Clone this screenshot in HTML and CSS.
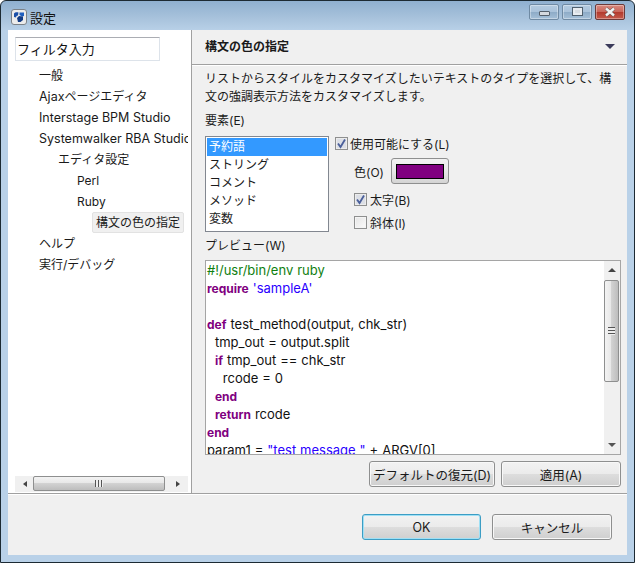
FILE: index.html
```html
<!DOCTYPE html>
<html lang="ja">
<head>
<meta charset="utf-8">
<title>設定</title>
<link rel="stylesheet" href="styles.css">
</head>
<body>
<div class="window">
  <div class="titlebar">
    <svg class="app-icon" width="16" height="16" viewBox="0 0 16 16"><rect x=".5" y=".5" width="15" height="15" rx="2.5" fill="#ececec" stroke="#7c8288"/><path d="M3 4.5C4 3 6 3 7.5 3.5L7 6.5 5.5 7 5 8.5 3 8z" fill="#1a4fa8"/><path d="M8.5 3.5h4.5v3.5L11 7.5 8.5 6z" fill="#1f5fc0"/><path d="M6 9l2-2 4 .5V11l-2.5 2H7z" fill="#123c86"/></svg>
    <span class="title">設定</span>
    <div class="controls">
      <div class="ctl ctl-min"><span class="glyph-min"></span></div>
      <div class="ctl ctl-max"><span class="glyph-max"></span></div>
      <div class="ctl ctl-close"><svg width="14" height="10" viewBox="0 0 14 10"><path d="M3 1.5l8 7M11 1.5l-8 7" stroke="#555" stroke-width="3.4" fill="none"/><path d="M3 1.5l8 7M11 1.5l-8 7" stroke="#f2f2f2" stroke-width="2.4" fill="none"/></svg></div>
    </div>
  </div>
  <div class="client">
    <div class="main">
      <div class="side">
        <div class="filter">フィルタ入力</div>
        <ul class="tree">
          <li class="l1">一般</li>
          <li class="l1"><span class="lat">Ajax</span>ページエディタ</li>
          <li class="l1"><span class="lat">Interstage BPM Studio</span></li>
          <li class="l1"><span class="lat">Systemwalker RBA Studio</span></li>
          <li class="l2">エディタ設定</li>
          <li class="l3">Perl</li>
          <li class="l3">Ruby</li>
          <li class="l4"><span class="sel">構文の色の指定</span></li>
          <li class="l1">ヘルプ</li>
          <li class="l1">実行/デバッグ</li>
        </ul>
        <div class="hscroll">
          <span class="arrow-left"></span>
          <div class="hthumb"><span class="grip-v"></span></div>
          <span class="arrow-right"></span>
        </div>
      </div>
      <div class="pane">
        <div class="pane-head">
          <span class="pane-title">構文の色の指定</span>
          <span class="menu-arrow"></span>
        </div>
        <div class="pane-body">
          <p class="desc">リストからスタイルをカスタマイズしたいテキストのタイプを選択して、構文の強調表示方法をカスタマイズします。</p>
          <div class="label-e">要素(E)</div>
          <div class="form">
            <ul class="list">
              <li class="on">予約語</li>
              <li>ストリング</li>
              <li>コメント</li>
              <li>メソッド</li>
              <li>変数</li>
            </ul>
            <div class="opts">
              <div class="opt opt-main"><span class="cb cb-on"><svg width="11" height="11" viewBox="0 0 11 11"><path d="M2 5.5l2.5 3.5L9 1.5" stroke="#4a5f9a" stroke-width="1.8" fill="none"/></svg></span>使用可能にする(L)</div>
              <div class="color-row">色(O)<span class="color-btn"><span class="swatch"></span></span></div>
              <div class="opt sub"><span class="cb cb-on"><svg width="11" height="11" viewBox="0 0 11 11"><path d="M2 5.5l2.5 3.5L9 1.5" stroke="#4a5f9a" stroke-width="1.8" fill="none"/></svg></span>太字(B)</div>
              <div class="opt sub italic-row"><span class="cb"></span>斜体(I)</div>
            </div>
          </div>
          <div class="label-w">プレビュー(W)</div>
          <div class="editor">
            <div class="code">
              <div class="ln"><span class="c">#!/usr/bin/env ruby</span></div>
              <div class="ln"><b class="k">require</b> <span class="s">'sampleA'</span></div>
              <div class="ln"></div>
              <div class="ln"><b class="k">def</b> test_method(output, chk_str)</div>
              <div class="ln">  tmp_out = output.split</div>
              <div class="ln">  <b class="k">if</b> tmp_out == chk_str</div>
              <div class="ln">    rcode = 0</div>
              <div class="ln">  <b class="k">end</b></div>
              <div class="ln">  <b class="k">return</b> rcode</div>
              <div class="ln"><b class="k">end</b></div>
              <div class="ln">param1 = <span class="s">"test message "</span> + ARGV[0]</div>
            </div>
            <div class="vscroll">
              <span class="arrow-up"></span>
              <div class="vthumb"><span class="grip-h"></span></div>
              <span class="arrow-down"></span>
            </div>
          </div>
          <div class="actions">
            <button class="btn btn-default">デフォルトの復元(D)</button>
            <button class="btn btn-apply">適用(A)</button>
          </div>
        </div>
      </div>
    </div>
    <div class="footer">
      <button class="btn btn-foot btn-ok">OK</button>
      <button class="btn btn-foot">キャンセル</button>
    </div>
  </div>
</div>
</body>
</html>
```
FILE: styles.css
```css
* { box-sizing: border-box; }
html, body { margin: 0; padding: 0; }
body { width: 635px; height: 563px; overflow: hidden; background: #fff; font-family: "Inter", "Noto Sans CJK JP", sans-serif; font-size: 12px; color: #1a1a1a; }
ul { list-style: none; margin: 0; padding: 0; }
p { margin: 0; }

.window { width: 635px; height: 563px; display: flex; flex-direction: column; border: 1px solid #1c2a33; border-radius: 6px 6px 0 0; background: linear-gradient(#8fb0d0 0, #a5c0da 15px, #b9d1e8 30px, #b9d1e8 100%); }
.titlebar { height: 29px; flex: none; display: flex; align-items: center; padding: 3px 9px 0 10px; }
.app-icon { flex: none; }
.title { margin-left: 3px; font-size: 13px; color: #111; font-family: "Noto Sans CJK JP", sans-serif; }
.controls { margin-left: auto; display: flex; gap: 3px; margin-top: -11px; }
.ctl { width: 30px; height: 16px; border: 1px solid #6f8aa3; border-radius: 2px; display: flex; align-items: center; justify-content: center; background: linear-gradient(#b4cbe0 0, #a9c2da 50%, #8dabc7 51%, #a5c0d8 100%); box-shadow: inset 0 0 0 1px rgba(255,255,255,.35); }
.ctl-close { background: linear-gradient(#d98a80 0, #c9655a 50%, #b23a2e 51%, #c55a4c 100%); border-color: #6b3a3a; }
.glyph-min { width: 11px; height: 5px; margin-top: 3px; background: #d5d9de; border: 1px solid #555f6a; border-radius: 1px; }
.glyph-max { width: 11px; height: 9px; background: #d8dde2; border: 1px solid #50606e; box-shadow: inset 0 0 0 2px #e8ecf0; }

.client { flex: 1; margin: 0 7px 7px; background: #f0f0f0; display: flex; flex-direction: column; min-height: 0; }
.main { height: 464px; flex: none; display: flex; border-bottom: 1px solid #a0a0a0; }

.side { width: 184px; flex: none; background: #fff; border-right: 1px solid #a0a0a0; display: flex; flex-direction: column; padding: 7px 4px 1px 7px; position: relative; }
.filter { width: 145px; height: 24px; border: 1px solid #dde3ea; border-top-color: #abadb3; font-size: 13px; line-height: 22px; padding-left: 1px; color: #111; background: #fff; flex: none; font-family: "Noto Sans CJK JP", sans-serif; }
.tree { flex: 1; overflow: hidden; padding-top: 4px; width: 173px; white-space: nowrap; }
.tree li { height: 21px; line-height: 21px; font-size: 12px; }
.lat { font-size: 12.5px; }
.l1 { padding-left: 24px; }
.l2 { padding-left: 43px; }
.l3 { padding-left: 62px; }
.l4 { padding-left: 77px; }
.sel { display: inline-block; height: 21px; line-height: 20px; padding: 0 3px; background: #f0f0f0; border: 1px solid #e2e2e2; border-radius: 2px; }
.hscroll { height: 16px; width: 173px; flex: none; background: #f0f0f0; display: flex; align-items: center; justify-content: space-between; padding: 0 8px; position: relative; }
.arrow-left { border: 3.5px solid transparent; border-right: 4px solid #444; border-left: 0; }
.arrow-right { border: 3.5px solid transparent; border-left: 4px solid #444; border-right: 0; }
.hthumb { position: absolute; left: 18px; top: 0; width: 132px; height: 15px; border: 1px solid #8e8f8f; border-radius: 2px; background: linear-gradient(#f3f3f3 0, #e8e8e8 45%, #d2d2d2 50%, #bdbdbd 100%); display: flex; align-items: center; justify-content: center; }
.grip-v { width: 8px; height: 7px; background: repeating-linear-gradient(90deg, #555 0 1px, #eee 1px 3px); }

.pane { flex: 1; min-width: 0; display: flex; flex-direction: column; }
.pane-head { height: 35px; flex: none; border-bottom: 1px solid #a0a0a0; box-shadow: 0 1px 0 #fff; display: flex; align-items: center; justify-content: space-between; padding: 0 12px 4px 13px; }
.pane-title { font-weight: 700; font-size: 12px; font-family: "Noto Sans CJK JP", sans-serif; }
.menu-arrow { border: 5px solid transparent; border-top: 5px solid #3a3a5a; border-bottom: 0; margin-top: 3px; }
.pane-body { flex: 1; padding: 5px 6px 0 13px; display: flex; flex-direction: column; min-height: 0; }
.desc { font-size: 12px; line-height: 18px; width: 412px; height: 36px; }
.label-e { line-height: 18px; margin-top: 6px; }
.form { display: flex; margin-top: 6px; height: 96px; }
.list { width: 124px; height: 96px; border: 1px solid #828790; background: #fff; padding: 1px; flex: none; }
.list li { height: 18px; line-height: 18px; padding-left: 2px; }
.list li.on { background: #3399ff; color: #fff; }
.opts { margin-left: 6px; display: flex; flex-direction: column; }
.opt { display: flex; align-items: center; height: 14px; gap: 3px; white-space: nowrap; }
.opt-main { gap: 2px; }
.cb { width: 13px; height: 13px; border: 1px solid #8e8f8f; background: linear-gradient(135deg, #e4e4e4, #fbfbfb); display: inline-flex; align-items: center; justify-content: center; box-shadow: inset 0 0 0 1px #f4f4f4; flex: none; }
.cb-on { background: #dcdfe6; box-shadow: inset 0 0 0 1px #ececec; }
.color-row { display: flex; align-items: center; height: 26px; margin-top: 8px; padding-left: 19px; gap: 7px; }
.color-btn { width: 58px; height: 26px; border: 1px solid #8e8f8f; border-radius: 3px; background: linear-gradient(#f2f2f2, #e8e8e8 50%, #d4d4d4); padding: 5px 4px; display: block; }
.swatch { display: block; width: 48px; height: 15px; background: #800080; border: 1px solid #000; }
.sub { margin-left: 19px; margin-top: 8px; }
.italic-row { margin-top: 9px; }
.label-w { line-height: 18px; margin-top: 5px; }
.editor { height: 195px; margin-top: 5px; flex: none; border: 1px solid #a5a5a5; background: #fff; position: relative; overflow: hidden; display: flex; }
.code { flex: 1; padding: 0 0 0 1px; font-size: 13px; color: #111; overflow: hidden; word-spacing: .3px; }
.ln { height: 18px; line-height: 18px; white-space: pre; overflow: visible; }
.k { color: #800080; font-weight: 700; font-size: 12px; }
.c { color: #108010; }
.s { color: #2a00ff; }
.vscroll { width: 16px; flex: none; background: #f0f0f0; position: relative; display: flex; flex-direction: column; align-items: center; justify-content: space-between; padding: 7px 0; }
.arrow-up { border: 4px solid transparent; border-bottom: 4px solid #444; border-top: 0; }
.arrow-down { border: 4px solid transparent; border-top: 4px solid #555; border-bottom: 0; }
.vthumb { position: absolute; left: 0; top: 19px; width: 15px; height: 102px; border: 1px solid #8e8f8f; border-radius: 2px; background: linear-gradient(90deg, #f3f3f3 0, #e8e8e8 45%, #d2d2d2 50%, #bdbdbd 100%); display: flex; align-items: center; justify-content: center; }
.grip-h { width: 7px; height: 8px; background: repeating-linear-gradient(#555 0 1px, #eee 1px 3px); }

.btn { font-family: "Inter", "Noto Sans CJK JP", sans-serif; font-size: 12.5px; color: #1a1a1a; padding: 0; border: 1px solid #8e8f8f; border-radius: 3px; background: linear-gradient(#f2f2f2 0, #ebebeb 50%, #dddddd 51%, #cfcfcf 100%); box-shadow: inset 0 0 0 1px #f8f8f8; white-space: nowrap; }
.actions { display: flex; justify-content: flex-end; gap: 6px; margin-top: 6px; }
.btn-default { width: 126px; height: 26px; }
.btn-apply { width: 120px; height: 26px; }
.footer { flex: 1; display: flex; justify-content: flex-end; align-items: flex-start; gap: 11px; padding: 19px 15px 0 0; border-top: 1px solid #fff; }
.btn-foot { width: 120px; height: 26px; }
.btn-ok { width: 119px; border-color: #3c9dc4; box-shadow: inset 0 0 0 1px #9fe0f5; }
```
